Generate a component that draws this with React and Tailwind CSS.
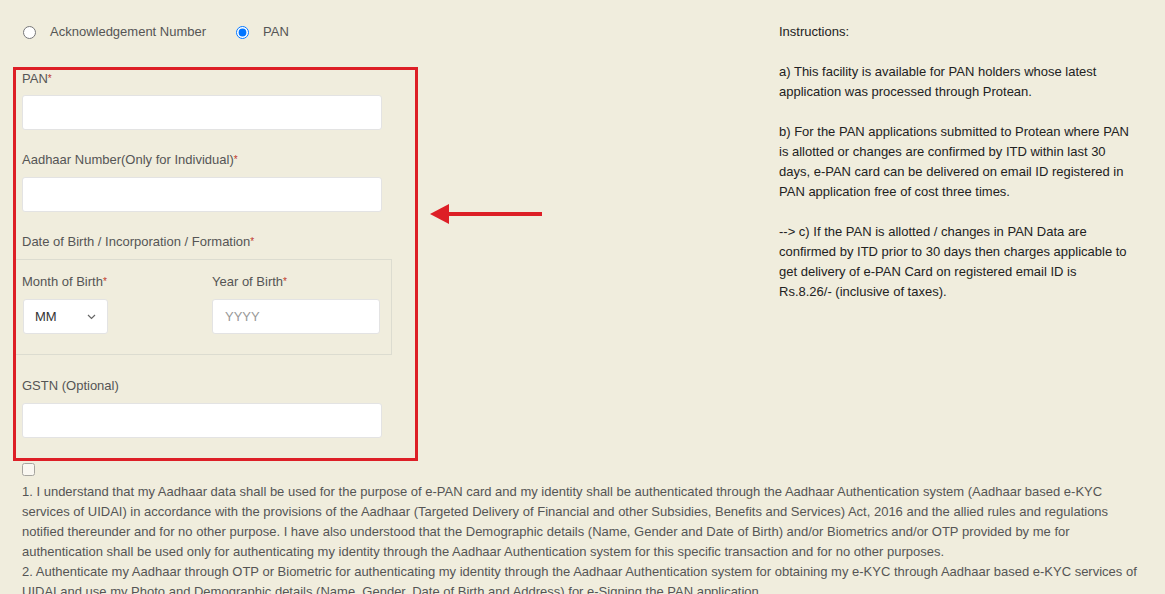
import React from "react";

const Req = () => <span className="text-[#c0392b] text-[10px] align-top">*</span>;

const Label = ({ children, required }) => (
  <div className="leading-[16px] text-[#555]">
    {children}
    {required && <Req />}
  </div>
);

const TextBox = ({ className = "", placeholder }) => (
  <input
    type="text"
    placeholder={placeholder}
    className={`block h-[35px] bg-white border border-[#e3e3e3] rounded-[3px] px-3 text-[13px] text-[#333] placeholder:text-[#999] outline-none ${className}`}
  />
);

export default function App() {
  return (
    <div className="relative min-h-screen bg-[#f0eddd] font-['Liberation_Sans',Arial,sans-serif] text-[13px] overflow-hidden">
      <div className="flex">
        {/* left: form */}
        <div className="w-[779px] pl-[13px]">
          <div className="flex items-center h-[14px] mt-[25px] pl-[10px] text-[#555]">
            <input type="radio" name="mode" className="w-[13px] h-[13px]" />
            <span className="ml-[14px]">Acknowledgement Number</span>
            <input type="radio" name="mode" defaultChecked className="w-[13px] h-[13px] ml-[30px]" />
            <span className="ml-[14px]">PAN</span>
          </div>

          <div className="mt-[28px] w-[405px] border-[3px] border-[#dd1f26] pb-[20px]">
            <div className="pl-[6px] pt-px">
              <Label required>PAN</Label>
              <TextBox className="mt-[8px] w-[360px]" />
              <div className="mt-[22px]">
                <Label required>Aadhaar Number(Only for Individual)</Label>
              </div>
              <TextBox className="mt-[9px] w-[360px]" />
              <div className="mt-[22px]">
                <Label required>Date of Birth / Incorporation / Formation</Label>
              </div>
            </div>

            <div className="mt-[9px] w-[376px] border border-l-0 border-[#dcdcd0] pt-[14px] pb-[20px] pl-[6px] flex">
              <div className="w-[190px]">
                <Label required>Month of Birth</Label>
                <div className="mt-[9px] ml-px w-[85px] h-[35px] bg-white border border-[#e3e3e3] rounded-[3px] flex items-center justify-between pl-[11px] pr-[11px] text-[#333]">
                  <span>MM</span>
                  <svg width="9" height="6" viewBox="0 0 9 6" fill="none" stroke="#666" strokeWidth="1.2">
                    <path d="M1 1l3.5 3.5L8 1" />
                  </svg>
                </div>
              </div>
              <div>
                <Label required>Year of Birth</Label>
                <TextBox className="mt-[9px] w-[168px]" placeholder="YYYY" />
              </div>
            </div>

            <div className="pl-[6px]">
              <div className="mt-[23px]">
                <Label>GSTN (Optional)</Label>
              </div>
              <TextBox className="mt-[9px] w-[360px]" />
            </div>
          </div>
        </div>

        {/* right: instructions */}
        <div className="pt-[22px] text-[#222] leading-[20px] whitespace-nowrap">
          <p>Instructions:</p>
          <br />
          <p>
            a) This facility is available for PAN holders whose latest
            <br />
            application was processed through Protean.
          </p>
          <br />
          <p>
            b) For the PAN applications submitted to Protean where PAN
            <br />
            is allotted or changes are confirmed by ITD within last 30
            <br />
            days, e-PAN card can be delivered on email ID registered in
            <br />
            PAN application free of cost three times.
          </p>
          <br />
          <p>
            --&gt; c) If the PAN is allotted / changes in PAN Data are
            <br />
            confirmed by ITD prior to 30 days then charges applicable to
            <br />
            get delivery of e-PAN Card on registered email ID is
            <br />
            Rs.8.26/- (inclusive of taxes).
          </p>
        </div>
      </div>

      <div className="pl-[22px]">
        <input type="checkbox" className="block mt-[2px] w-[13px] h-[13px] opacity-60" />
        <p className="mt-[6px] leading-[20px] text-[#555] whitespace-nowrap">
          1. I understand that my Aadhaar data shall be used for the purpose of e-PAN card and my identity shall be authenticated through the Aadhaar Authentication system (Aadhaar based e-KYC
          <br />
          services of UIDAI) in accordance with the provisions of the Aadhaar (Targeted Delivery of Financial and other Subsidies, Benefits and Services) Act, 2016 and the allied rules and regulations
          <br />
          notified thereunder and for no other purpose. I have also understood that the Demographic details (Name, Gender and Date of Birth) and/or Biometrics and/or OTP provided by me for
          <br />
          authentication shall be used only for authenticating my identity through the Aadhaar Authentication system for this specific transaction and for no other purposes.
          <br />
          2. Authenticate my Aadhaar through OTP or Biometric for authenticating my identity through the Aadhaar Authentication system for obtaining my e-KYC through Aadhaar based e-KYC services of
          <br />
          UIDAI and use my Photo and Demographic details (Name, Gender, Date of Birth and Address) for e-Signing the PAN application.
        </p>
      </div>

      {/* annotation arrow */}
      <svg className="absolute left-[428px] top-[202px]" width="116" height="24" viewBox="0 0 116 24">
        <path d="M2 12L21 2V22Z" fill="#dd1f26" />
        <rect x="20" y="10" width="94" height="4" fill="#dd1f26" />
      </svg>
    </div>
  );
}
